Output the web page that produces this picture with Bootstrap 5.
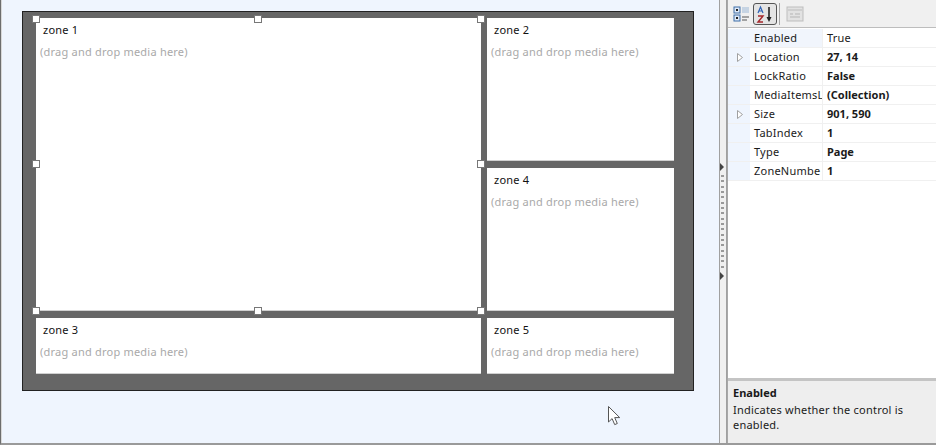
<!DOCTYPE html>
<html lang="en">

<head>
    <meta charset="UTF-8">
    <meta name="viewport" content="width=device-width, initial-scale=1.0">
    <title>Zone designer</title>
    <link href="https://cdn.jsdelivr.net/npm/bootstrap@5.3.0/dist/css/bootstrap.min.css" rel="stylesheet">
    <style>
        html, body {
            height: 100%;
            overflow: hidden;
        }

        body {
            font-family: "Noto Sans", sans-serif;
            font-size: 11px;
            line-height: 15px;
            letter-spacing: .22px;
            color: #1a1a1a;
            background: #f0f0f0;
        }

        strong, .prop-bold {
            letter-spacing: 0;
        }

        .app-shell {
            height: 445px;
            border-left: 1px solid #6d6d6d;
            border-bottom: 2px solid #9a9a9a;
        }

        .design-area {
            position: relative;
            width: 718px;
            flex: none;
            padding: 11px 0 0 20px;
            background: #eff5fe;
            border-left: 1px solid #d8d8d8;
        }

        .page-frame {
            display: grid;
            grid-template-columns: 445px 187px;
            grid-template-rows: 143px 143px 56px;
            column-gap: 6px;
            row-gap: 7px;
            position: relative;
            width: 672px;
            height: 380px;
            padding: 6px 19px 16px 13px;
            background: #666;
            border: 1px solid #222;
        }

        .zone {
            background: #fff;
            padding: 4px;
            border-bottom: 1px solid #d0d0d0;
        }

        .zone-large {
            grid-row: span 2;
        }

        .zone-wide {
            grid-column: 1;
        }

        .zone-name {
            padding-left: 3px;
            color: #111;
        }

        .zone-hint {
            margin-top: 7px;
            color: #a9a9a9;
        }

        .handle {
            position: absolute;
            width: 8px;
            height: 8px;
            background: #fff;
            border: 1px solid #777;
        }

        .pointer {
            position: absolute;
            left: 605px;
            top: 405px;
        }

        .split-bar {
            width: 8px;
            flex: none;
            background: #f0f0f0;
            border-left: 1px solid #a0a0a0;
            border-right: 1px solid #a0a0a0;
            position: relative;
        }

        .split-arrow {
            position: absolute;
            left: 0;
            width: 0;
            height: 0;
            border-top: 4px solid transparent;
            border-bottom: 4px solid transparent;
            border-left: 4px solid #444;
        }

        .split-dots {
            position: absolute;
            left: 1px;
            top: 175px;
            width: 3px;
            height: 93px;
            background: repeating-linear-gradient(to bottom, #9a9a9a 0 2px, #f0f0f0 2px 5.33px);
        }

        .props-panel {
            flex: 1;
            min-width: 0;
            border-left: 1px solid #a8a8a8;
        }

        .props-tools {
            height: 28px;
            padding: 3px 0 0 3px;
            background: #f0f0f0;
            border-bottom: 1px solid #bdbdbd;
        }

        .tool-btn {
            display: flex;
            align-items: center;
            justify-content: center;
            width: 22px;
            height: 22px;
        }

        .tool-on {
            width: 24px;
            border: 1px solid #555;
            border-radius: 3px;
            background: #e4e4e4;
        }

        .tool-sep {
            width: 1px;
            height: 22px;
            margin: 0 4px 0 2px;
            background: #a8a8a8;
        }

        .props-grid {
            flex: 1;
            background: #fff;
            padding-top: 1px;
            border-bottom: 3px solid #c4c4c4;
        }

        .prop-row {
            display: flex;
            height: 19px;
            line-height: 18px;
            border-bottom: 1px solid #f0f0f0;
        }

        .prop-gutter {
            width: 22px;
            flex: none;
            display: flex;
            align-items: center;
            padding-left: 9px;
            background: #eff5fe;
        }

        .prop-name {
            width: 73px;
            flex: none;
            padding-left: 4px;
            overflow: hidden;
            white-space: nowrap;
            border-right: 1px solid #f0f0f0;
        }

        .prop-row.is-selected .prop-name {
            background: #f1f5fc;
        }

        .prop-value {
            padding-left: 4px;
            white-space: nowrap;
        }

        .prop-bold {
            font-weight: 700;
        }

        .props-desc {
            height: 62px;
            flex: none;
            padding: 4px 5px;
            background: #eeeeee;
        }

        .props-desc strong {
            display: block;
            margin-bottom: 2px;
        }
    </style>
</head>

<body>
    <div class="app-shell d-flex">
        <div class="design-area">
            <div class="page-frame">
                <div class="zone zone-large">
                    <div class="zone-name">zone 1</div>
                    <div class="zone-hint">(drag and drop media here)</div>
                </div>
                <div class="zone">
                    <div class="zone-name">zone 2</div>
                    <div class="zone-hint">(drag and drop media here)</div>
                </div>
                <div class="zone">
                    <div class="zone-name">zone 4</div>
                    <div class="zone-hint">(drag and drop media here)</div>
                </div>
                <div class="zone zone-wide">
                    <div class="zone-name">zone 3</div>
                    <div class="zone-hint">(drag and drop media here)</div>
                </div>
                <div class="zone">
                    <div class="zone-name">zone 5</div>
                    <div class="zone-hint">(drag and drop media here)</div>
                </div>

                <!-- selection handles round zone 1 -->
                <span class="handle" style="left:9px;top:3px"></span>
                <span class="handle" style="left:231px;top:3px"></span>
                <span class="handle" style="left:454px;top:3px"></span>
                <span class="handle" style="left:9px;top:148px"></span>
                <span class="handle" style="left:454px;top:148px"></span>
                <span class="handle" style="left:9px;top:295px"></span>
                <span class="handle" style="left:231px;top:295px"></span>
                <span class="handle" style="left:454px;top:295px"></span>
            </div>

            <svg class="pointer" width="16" height="22" viewBox="0 0 16 22">
                <path d="M1.5 1.5V17l3.6-3.4 2.6 6 2.6-1.1-2.6-5.9h5z" fill="#fff" stroke="#555" stroke-width="1"/>
            </svg>
        </div>

        <div class="split-bar">
            <span class="split-arrow" style="top:163px"></span>
            <span class="split-dots"></span>
            <span class="split-arrow" style="top:272px"></span>
        </div>

        <div class="props-panel d-flex flex-column">
            <div class="props-tools d-flex">
                <span class="tool-btn">
                    <svg width="18" height="18" viewBox="0 0 18 18">
                        <rect x="1" y="2" width="6" height="6" fill="#dfe9f7" stroke="#3f6fa8"/>
                        <rect x="1" y="10" width="6" height="6" fill="#dfe9f7" stroke="#3f6fa8"/>
                        <rect x="3" y="4" width="2" height="2" fill="#222"/>
                        <rect x="3" y="12" width="2" height="2" fill="#222"/>
                        <path d="M9 3h7M9 5h7M9 7h7" stroke="#9db8d6"/>
                        <path d="M9 12h7M9 15h5" stroke="#555"/>
                    </svg>
                </span>
                <span class="tool-btn tool-on">
                    <svg width="20" height="19" viewBox="0 0 20 19">
                        <path d="M3 8l2.5-6L8 8M4 6h3" fill="none" stroke="#2f62b5" stroke-width="1.2"/>
                        <path d="M3 11h5l-5 6h5" fill="none" stroke="#a5272b" stroke-width="1.4"/>
                        <path d="M14 2v12" stroke="#222" stroke-width="1.6"/>
                        <path d="M11.5 12h5L14 17z" fill="#222"/>
                    </svg>
                </span>
                <span class="tool-sep"></span>
                <span class="tool-btn">
                    <svg width="18" height="16" viewBox="0 0 18 16">
                        <rect x="1" y="1" width="16" height="14" fill="#e2e2e2" stroke="#bdbdbd"/>
                        <path d="M1 4h16" stroke="#cfcfcf" stroke-width="2"/>
                        <path d="M4 8h3M9 8h5M4 11h10" stroke="#b5b5b5"/>
                    </svg>
                </span>
            </div>

            <div class="props-grid" id="prop-list"></div>

            <div class="props-desc">
                <strong>Enabled</strong>
                Indicates whether the control is enabled.
            </div>
        </div>
    </div>

    <script>
        // names are cut by the column in the real grid, so keep them as shown
        const props = [
            { name: "Enabled", value: "True", selected: true },
            { name: "Location", value: "27, 14", bold: true, sub: true },
            { name: "LockRatio", value: "False", bold: true },
            { name: "MediaItemsL", value: "(Collection)", bold: true },
            { name: "Size", value: "901, 590", bold: true, sub: true },
            { name: "TabIndex", value: "1", bold: true },
            { name: "Type", value: "Page", bold: true },
            { name: "ZoneNumbe", value: "1", bold: true }
        ];

        const arrow = '<svg width="6" height="9" viewBox="0 0 6 9"><path d="M.5.5l5 4-5 4z" fill="#fff" stroke="#a0a0a0"/></svg>';

        const list = document.getElementById('prop-list');
        props.forEach(p => {
            let row = document.createElement("div");
            row.className = "prop-row" + (p.selected ? " is-selected" : "");
            row.innerHTML = `<span class="prop-gutter">${p.sub ? arrow : ""}</span>` +
                `<span class="prop-name">${p.name}</span>` +
                `<span class="prop-value${p.bold ? " prop-bold" : ""}">${p.value}</span>`;
            list.appendChild(row);
        });
    </script>
    <script src="https://cdn.jsdelivr.net/npm/bootstrap@5.3.0/dist/js/bootstrap.bundle.min.js"></script>
</body>

</html>
